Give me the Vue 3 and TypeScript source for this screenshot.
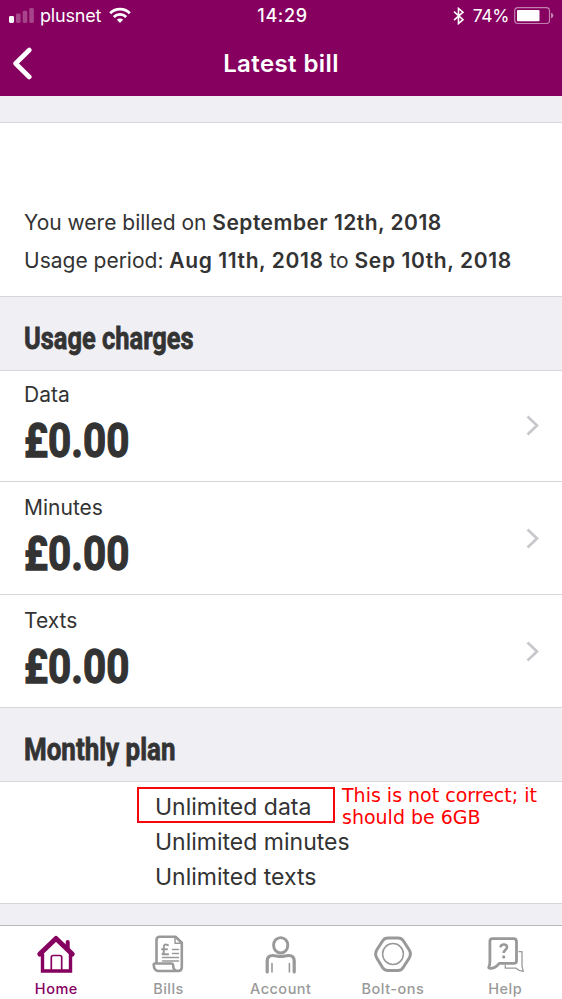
<script setup lang="ts">
interface Charge {
  label: string
  amount: string
}

interface Tab {
  id: string
  label: string
}

const charges: Charge[] = [
  { label: 'Data', amount: '£0.00' },
  { label: 'Minutes', amount: '£0.00' },
  { label: 'Texts', amount: '£0.00' },
]

const tabs: Tab[] = [
  { id: 'home', label: 'Home' },
  { id: 'bills', label: 'Bills' },
  { id: 'account', label: 'Account' },
  { id: 'bolt', label: 'Bolt-ons' },
  { id: 'help', label: 'Help' },
]
const activeTab = 'home'
</script>

<template>
  <div class="screen">
    <header class="top">
      <div class="status">
        <div class="status-left">
          <svg class="signal" width="26" height="16" viewBox="0 0 26 16">
            <rect x="0" y="8" width="5" height="7" rx="1.4" fill="#fff" />
            <rect x="7" y="5.5" width="4.6" height="9.5" rx="1.4" fill="#fff" opacity=".27" />
            <rect x="13.7" y="2.7" width="4.6" height="12.3" rx="1.4" fill="#fff" opacity=".27" />
            <rect x="20.3" y="0" width="4.6" height="15" rx="1.4" fill="#fff" opacity=".27" />
          </svg>
          <span class="carrier">plusnet</span>
          <svg class="wifi" width="22" height="17" viewBox="0 0 22 17" fill="none" stroke="#fff" stroke-width="2.7">
            <path d="M1.2 6.2a13.8 13.8 0 0 1 19.6 0" />
            <path d="M4.8 10a8.8 8.8 0 0 1 12.4 0" />
            <path d="M11 16l-3.1-3.2a4.4 4.4 0 0 1 6.2 0z" fill="#fff" stroke="none" />
          </svg>
        </div>
        <span class="clock">14:29</span>
        <div class="status-right">
          <svg class="bluetooth" width="12" height="18" viewBox="0 0 12 18" fill="none" stroke="#fff" stroke-width="1.6">
            <path d="M1 4.700l9 8L5.500 16.500V1.500L10 5.200l-9 8" />
          </svg>
          <span class="percent">74%</span>
          <svg class="battery" width="41" height="18" viewBox="0 0 41 18">
            <rect x=".7" y=".7" width="34.8" height="15.8" rx="3.2" fill="none" stroke="#fff" stroke-width="1.2" opacity=".5" />
            <rect x="3" y="3" width="22.5" height="11.2" rx=".8" fill="#fff" />
            <path d="M37 5.8q2.4.8 2.4 2.8T37 11.4z" fill="#fff" opacity=".5" />
          </svg>
        </div>
      </div>
      <div class="nav">
        <svg class="back" width="20" height="34" viewBox="0 0 20 34" fill="none" stroke="#fff" stroke-width="4.6" stroke-linecap="round" stroke-linejoin="round">
          <path d="M17.300 3L3.600 16.500 17.300 30" />
        </svg>
        <h1>Latest bill</h1>
      </div>
    </header>

    <main>
      <div class="gap"></div>
      <section class="summary">
        <p>You were billed on <b class="billed-date">September 12th, 2018</b></p>
        <p>Usage period: <b>Aug 11th, 2018</b> to <b>Sep 10th, 2018</b></p>
      </section>

      <h2><span class="usage">Usage charges</span></h2>
      <a v-for="charge in charges" :key="charge.label" class="charge">
        <div>
          <div class="charge-label">{{ charge.label }}</div>
          <div class="amount">{{ charge.amount }}</div>
        </div>
        <svg width="14" height="22" viewBox="0 0 14 22" fill="none" stroke="#c7c7cc" stroke-width="2.7">
          <path d="M1.500 1.500L11 10.500l-9.500 9" />
        </svg>
      </a>

      <h2><span class="monthly">Monthly plan</span></h2>
      <section class="plan">
        <div>Unlimited data</div>
        <div>Unlimited minutes</div>
        <div>Unlimited texts</div>
        <div class="mark"></div>
        <div class="note">This is not correct; it<br />should be 6GB</div>
      </section>
      <div class="bottom-gap"></div>
    </main>

    <nav class="tabs">
      <a v-for="tab in tabs" :key="tab.id" class="tab" :class="{ active: tab.id === activeTab }">
        <svg width="40" height="40" viewBox="0 0 40 40" fill="none" stroke="currentColor" stroke-linecap="round" stroke-linejoin="round">
          <template v-if="tab.id === 'home'">
            <path d="M3.800 20L20 4.500 36.200 20" stroke-width="5" />
            <path d="M6.500 20v17h28V20" stroke-width="3.400" stroke-linejoin="miter" />
            <path d="M31.700 8v7" stroke-width="4" />
            <path d="M15.300 37V23.200q0-1.700 1.700-1.700h7q1.700 0 1.700 1.700V37" stroke-width="1.700" />
          </template>
          <template v-else-if="tab.id === 'bills'">
            <path d="M8.500 29.500V6q0-3.300 3.300-3.300h15.700l6.300 6.100v24.500q0 3.700-3.700 3.700H10.500q-4.500 0-4.800-6.300 0-1.200 1.300-1.200h16.500c1.500 0 1.700 1 1.700 2.500 0 3 2 5 5 5" stroke-width="2.600" />
            <path d="M27 3v6.300h6.500M24.500 15.500h6M24.500 19.500h6M14.500 23.500h16M14.500 27h16" stroke-width="1.500" />
            <path d="M20 11.200q-4.200-2-4.200 2v5.300l-1.300 1.700h5.700M14 15.300h5" stroke-width="1.900" />
          </template>
          <template v-else-if="tab.id === 'account'">
            <ellipse cx="20.700" cy="11.300" rx="7.100" ry="7.700" stroke-width="2.900" />
            <path d="M7.200 38V27q0-5.500 5.500-5.500c3 0 4.500 1 8 1s5-1 8-1q5.500 0 5.500 5.500v11" stroke-width="3.200" />
            <path d="M12 29.500V38M29.400 29.500V38" stroke-width="1.600" />
          </template>
          <template v-else-if="tab.id === 'bolt'">
            <path d="M15 4h10q3.500 0 5.300 2.800l5.800 9q2.600 4.200 0 8.400l-5.800 9Q28.500 36.500 25 36.500H15q-3.500 0-5.300-2.800l-5.800-9.500q-2.600-4.200 0-8.400l5.800-9Q11.500 4 15 4z" stroke-width="3" />
            <circle cx="20" cy="20" r="10.400" stroke-width="1.500" />
          </template>
          <template v-else>
            <path d="M7.500 4.700h21q3 0 3 3v19q0 2.600-2.700 2.600H14.300q-4.300 5.200-9.500 5-1.500-.1-.9-1.500 1-1.500 1-5V7.500q0-2.800 2.600-2.800z" stroke-width="2.800" />
            <path d="M34 17.700h3v14.500l1.300 5.200q-4.300-.4-7.300-3.200H20.300v-3" stroke-width="1.300" />
            <path d="M15.500 13.400q.3-2.900 3.300-2.900 3.200 0 3.200 2.700c0 2.600-3.300 2.600-3.300 5.800" stroke-width="2.600" stroke-linecap="butt" />
            <circle cx="18.700" cy="22.900" r="1.600" fill="currentColor" stroke="none" />
          </template>
        </svg>
        <span>{{ tab.label }}</span>
      </a>
    </nav>
  </div>
</template>

<style>
body {
  margin: 0;
}
</style>

<style scoped>
* {
  box-sizing: border-box;
}
.screen {
  width: 562px;
  height: 999px;
  display: flex;
  flex-direction: column;
  overflow: hidden;
  background: #fff;
  color: #333;
  font-family: Inter, 'Liberation Sans', sans-serif;
}
.top {
  height: 96px;
  flex: none;
  background: #86005f;
  color: #fff;
}
.status {
  height: 31px;
  display: grid;
  grid-template-columns: 1fr auto 1fr;
  align-items: center;
  padding: 0 7px 0 9px;
  font-size: 18px;
}
.status-left,
.status-right {
  display: flex;
  align-items: center;
}
.status-right {
  justify-content: flex-end;
}
.signal {
  margin-right: 5px;
}
.carrier {
  letter-spacing: -0.2px;
}
.wifi {
  margin-left: 8px;
}
.clock {
  padding-left: 1px;
  font-weight: 500;
  font-size: 18px;
  letter-spacing: 0.65px;
}
.percent {
  margin: 0 5px 0 8px;
  font-size: 17.500px;
  letter-spacing: -0.4px;
}
.nav {
  height: 65px;
  display: grid;
  grid-template-columns: 60px 1fr 60px;
  align-items: center;
}
.back {
  margin-left: 12px;
}
h1 {
  margin: 0;
  text-align: center;
  font-size: 24px;
  font-weight: 600;
  letter-spacing: 0.4px;
}
.gap {
  height: 27px;
  background: #efeff4;
  border-bottom: 1px solid #d9d9dc;
}
.summary {
  height: 173px;
  padding: 81px 24px 0;
  font-size: 21px;
}
.summary p {
  margin: 0;
  height: 38px;
  line-height: 38px;
  white-space: nowrap;
}
.summary b {
  font-weight: 600;
  letter-spacing: 0.6px;
}
.summary .billed-date {
  letter-spacing: 0.47px;
}
h2 {
  height: 75px;
  margin: 0;
  padding: 21px 24px 0;
  background: #efeff4;
  border-top: 1px solid #d6d6d8;
  border-bottom: 1px solid #d6d6d8;
  font: 700 32px/40px Roboto, sans-serif;
  white-space: nowrap;
}
h2 span {
  display: inline-block;
  transform-origin: 0 50%;
  -webkit-text-stroke: 0.8px #333;
}
.usage {
  transform: scaleX(0.795);
}
.monthly {
  transform: scaleX(0.811);
}
.charge {
  height: 113px;
  display: flex;
  justify-content: space-between;
  padding: 14px 22px 0 24px;
  border-bottom: 1px solid #d6d6d8;
}
.charge svg {
  margin-top: 32px;
}
.charge:nth-of-type(1) {
  height: 111px;
  padding-top: 12px;
}
.charge:nth-of-type(3) {
  height: 112px;
  border-bottom: 0;
}
.charge-label {
  font-size: 21px;
  line-height: 24px;
}
.amount {
  margin-top: 5px;
  font: 700 49px/58px Roboto, sans-serif;
  transform-origin: 0 50%;
  transform: scaleX(0.825);
  -webkit-text-stroke: 1.3px #333;
}
.plan {
  position: relative;
  height: 121px;
  padding: 8px 0 0 155px;
  font-size: 23px;
  line-height: 35px;
}
.mark {
  position: absolute;
  left: 137px;
  top: 5px;
  width: 198px;
  height: 36px;
  border: 2px solid #f8080c;
}
.note {
  position: absolute;
  left: 342px;
  top: 2px;
  font: 19px/22px 'DejaVu Sans', sans-serif;
  color: #f00;
  white-space: nowrap;
}
.bottom-gap {
  height: 22px;
  background: #efeff4;
  border-top: 1px solid #d6d6d8;
}
.tabs {
  flex: 1;
  display: grid;
  grid-template-columns: repeat(5, 1fr);
  padding-right: 1px;
  border-top: 1px solid #b8b8bc;
  background: #fff;
}
.tab {
  display: flex;
  flex-direction: column;
  align-items: center;
  padding-top: 8px;
  color: #999;
  font-size: 14.500px;
  font-weight: 500;
  line-height: 18px;
  letter-spacing: 0.5px;
}
.tab span {
  margin-top: 6px;
  padding-left: 0.5px;
}
.active {
  color: #86005f;
}
</style>
